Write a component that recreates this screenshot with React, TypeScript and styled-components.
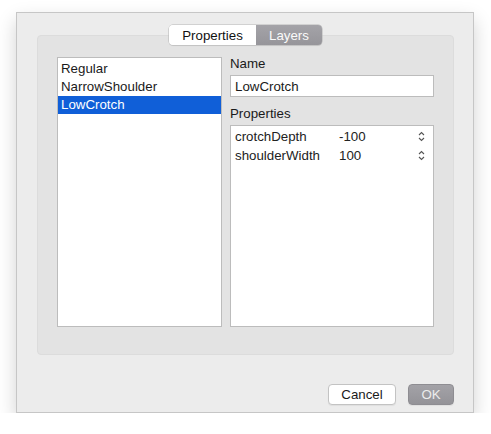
import React, {useState} from 'react';
import styled, {createGlobalStyle} from "styled-components";

type PropRow = {
    name: string,
    value: string
}

const layers = ["Regular", "NarrowShoulder", "LowCrotch"];

const rows: PropRow[] = [
    {name: "crotchDepth", value: "-100"},
    {name: "shoulderWidth", value: "100"},
];

const Stepper = () => (
    <svg width="7" height="11" viewBox="0 0 7 11">
        <path d="M1 4 L3.5 1.5 L6 4" fill="none" stroke="#555" strokeWidth="1.1"/>
        <path d="M1 7 L3.5 9.5 L6 7" fill="none" stroke="#555" strokeWidth="1.1"/>
    </svg>
);

export default function App() {
    const [tab, setTab] = useState<"properties" | "layers">("layers");
    const [selected, setSelected] = useState(2);

    return (
        <>
            <GlobalStyle/>
            <Page>
                <Window>
                    <Tabs>
                        <Tab active={tab === "properties"} onClick={() => setTab("properties")}>Properties</Tab>
                        <Tab active={tab === "layers"} onClick={() => setTab("layers")} dark>Layers</Tab>
                    </Tabs>
                    <Group>
                        <List>
                            {layers.map((l, i) => (
                                <Item key={l} selected={i === selected} onClick={() => setSelected(i)}>{l}</Item>
                            ))}
                        </List>
                        <Side>
                            <Label>Name</Label>
                            <Field value={layers[selected]} readOnly/>
                            <Label second>Properties</Label>
                            <Table>
                                {rows.map(r => (
                                    <Row key={r.name}>
                                        <Key>{r.name}</Key>
                                        <Value>{r.value}</Value>
                                        <Stepper/>
                                    </Row>
                                ))}
                            </Table>
                        </Side>
                    </Group>
                    <Footer>
                        <Button>Cancel</Button>
                        <Button disabledLook>OK</Button>
                    </Footer>
                </Window>
            </Page>
        </>
    );
}

const GlobalStyle = createGlobalStyle`
    body {
        margin: 0;
        background: #fff;
        font-family: "Liberation Sans", Arial, sans-serif;
        font-size: 13.3px;
        color: #222;
    }
`

const Page = styled.div`
    padding: 12px 0 0 16px;
`

const Window = styled.div`
    width: 456px;
    height: 387px;
    background: #ececec;
    border: 1px solid #c6c6c6;
    box-shadow: 0 8px 18px rgba(0, 0, 0, 0.18);
    padding: 12px 0 0 0;
    box-sizing: content-box;
    display: flex;
    flex-direction: column;
`

const Tabs = styled.div`
    align-self: center;
    display: flex;
    height: 20px;
    margin-bottom: -10px;
    margin-left: 1px;
    position: relative;
    z-index: 1;
    border-radius: 4px;
    box-shadow: 0 0 0 0.5px #b6b6b6, 0 1px 1px rgba(0, 0, 0, 0.08);
    overflow: hidden;
`

const Tab = styled.div<{ active?: boolean, dark?: boolean }>`
    display: flex;
    align-items: center;
    justify-content: center;
    width: ${p => p.dark ? 66 : 87}px;
    background: ${p => p.dark ? "linear-gradient(#a4a3a8, #96959a)" : "#fff"};
    color: ${p => p.dark ? "#fafafa" : "#111"};
    cursor: default;
`

const Group = styled.div`
    margin: 0 19px 0 20px;
    height: 320px;
    background: #e3e3e3;
    border: 1px solid #dcdcdc;
    border-radius: 4px;
    box-sizing: border-box;
    padding: 21px 19px 0 19px;
    display: flex;
    gap: 8px;
`

const List = styled.div`
    width: 165px;
    height: 270px;
    box-sizing: border-box;
    background: #fff;
    border: 1px solid #bcbcbc;
    padding-top: 2px;
`

const Item = styled.div<{ selected?: boolean }>`
    height: 18px;
    line-height: 18px;
    padding-left: 3px;
    background: ${p => p.selected ? "#105fd8" : "transparent"};
    color: ${p => p.selected ? "#fff" : "#1a1a1a"};
`

const Side = styled.div`
    width: 204px;
    display: flex;
    flex-direction: column;
`

const Label = styled.div<{ second?: boolean }>`
    height: 16px;
    line-height: 16px;
    margin-top: ${p => p.second ? 9 : -1}px;
    margin-bottom: 3px;
    color: #1a1a1a;
`

const Field = styled.input`
    width: 204px;
    height: 22px;
    box-sizing: border-box;
    border: 1px solid #bcbcbc;
    background: #fff;
    font: inherit;
    color: #1a1a1a;
    padding: 0 4px;
    outline: none;
`

const Table = styled.div`
    height: 202px;
    box-sizing: border-box;
    background: #fff;
    border: 1px solid #bcbcbc;
    padding-top: 1px;
`

const Row = styled.div`
    display: flex;
    align-items: center;
    height: 19px;
    padding: 0 8px 0 4px;
`

const Key = styled.span`
    width: 104px;
`

const Value = styled.span`
    flex: 1;
`

const Footer = styled.div`
    display: flex;
    justify-content: flex-end;
    gap: 12px;
    margin: 29px 19px 0 0;
`

const Button = styled.button<{ disabledLook?: boolean }>`
    height: 21px;
    width: ${p => p.disabledLook ? 46 : 68}px;
    border-radius: 4px;
    font: inherit;
    padding: 0;
    border: 1px solid ${p => p.disabledLook ? "#8e8d92" : "#c3c3c3"};
    background: ${p => p.disabledLook ? "linear-gradient(#a3a2a7, #949398)" : "#fff"};
    color: ${p => p.disabledLook ? "#ececec" : "#1a1a1a"};
    box-shadow: 0 1px 1px rgba(0, 0, 0, 0.06);
`
